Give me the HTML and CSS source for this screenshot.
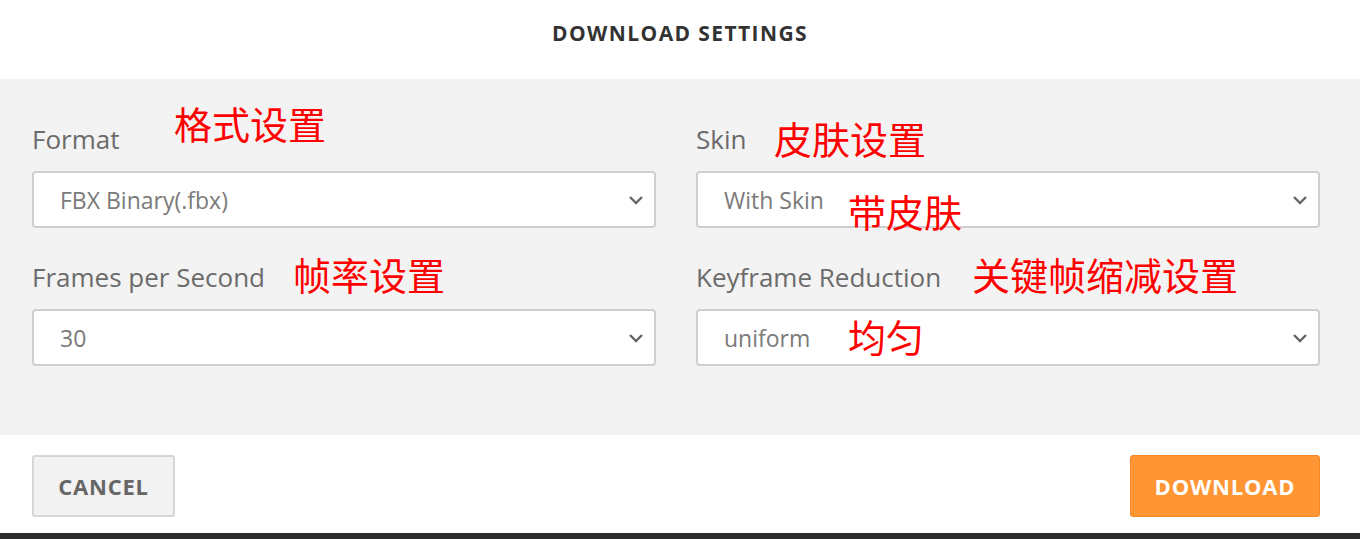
FILE: index.html
```html
<!DOCTYPE html>
<html lang="en">
<head>
  <meta charset="UTF-8">
  <title>Download Settings</title>
  <link rel="stylesheet" href="styles.css">
</head>
<body>
  <div class="dialog">
    <div class="dialog-header">Download Settings</div>

    <div class="dialog-body">
      <div class="field">
        <div class="field-label">Format</div>
        <div class="select">
          <span>FBX Binary(.fbx)</span>
          <svg class="chevron" viewBox="0 0 16 10"><path d="M2 2l6 6 6-6"/></svg>
        </div>
        <div class="note note-format">格式设置</div>
      </div>

      <div class="field">
        <div class="field-label">Skin</div>
        <div class="select">
          <span>With Skin</span>
          <svg class="chevron" viewBox="0 0 16 10"><path d="M2 2l6 6 6-6"/></svg>
        </div>
        <div class="note note-skin">皮肤设置</div>
        <div class="note note-withskin">带皮肤</div>
      </div>

      <div class="field">
        <div class="field-label">Frames per Second</div>
        <div class="select">
          <span>30</span>
          <svg class="chevron" viewBox="0 0 16 10"><path d="M2 2l6 6 6-6"/></svg>
        </div>
        <div class="note note-fps">帧率设置</div>
      </div>

      <div class="field">
        <div class="field-label">Keyframe Reduction</div>
        <div class="select">
          <span>uniform</span>
          <svg class="chevron" viewBox="0 0 16 10"><path d="M2 2l6 6 6-6"/></svg>
        </div>
        <div class="note note-keyframe">关键帧缩减设置</div>
        <div class="note note-uniform">均匀</div>
      </div>
    </div>

    <div class="dialog-footer">
      <button class="btn btn-cancel">Cancel</button>
      <button class="btn btn-download">Download</button>
    </div>
  </div>
  <div class="taskbar"></div>
</body>
</html>
```

FILE: styles.css
```css
body {
  margin: 0;
  font-family: "Open Sans", "Noto Sans", sans-serif;
  background: #fff;
  height: 539px;
  overflow: hidden;
}

.dialog {
  display: flex;
  flex-direction: column;
}

.dialog-header {
  height: 79px;
  display: flex;
  align-items: center;
  justify-content: center;
  padding-bottom: 14px;
  box-sizing: border-box;
  font-size: 21px;
  font-weight: 700;
  letter-spacing: 1.4px;
  text-transform: uppercase;
  color: #333;
}

.dialog-body {
  background: #f3f3f3;
  padding: 41px 40px 69px 32px;
  display: grid;
  grid-template-columns: 1fr 1fr;
  column-gap: 40px;
  row-gap: 30px;
}

.field {
  position: relative;
}

.field-label {
  font-size: 26px;
  line-height: 38px;
  color: #6b6b6b;
  margin-bottom: 13px;
}

.select {
  height: 57px;
  box-sizing: border-box;
  background: #fff;
  border: 2px solid #cfcfcf;
  border-radius: 4px;
  display: flex;
  align-items: center;
  justify-content: space-between;
  padding: 0 10px 0 26px;
  font-size: 23px;
  color: #7a7a7a;
}

.chevron {
  width: 16px;
  height: 10px;
  fill: none;
  stroke: #666;
  stroke-width: 2.4;
}

.note {
  position: absolute;
  font-family: "Noto Sans CJK SC", sans-serif;
  font-size: 38px;
  line-height: 38px;
  color: #ff0000;
  white-space: nowrap;
}

.note-format { left: 142px; top: -16px; }
.note-skin { left: 78px; top: -1px; }
.note-withskin { left: 152px; top: 72px; }
.note-fps { left: 261px; top: -3px; }
.note-keyframe { left: 276px; top: -3px; }
.note-uniform { left: 152px; top: 59px; }

.dialog-footer {
  height: 98px;
  box-sizing: border-box;
  padding: 20px 40px 16px 32px;
  display: flex;
  justify-content: space-between;
  align-items: flex-start;
}

.btn {
  height: 62px;
  border-radius: 3px;
  font-family: "Open Sans", sans-serif;
  font-size: 22px;
  font-weight: 700;
  text-transform: uppercase;
  letter-spacing: 0.8px;
  cursor: pointer;
}

.btn-cancel {
  width: 143px;
  background: #f2f2f2;
  border: 2px solid #d6d6d6;
  color: #666;
}

.btn-download {
  width: 190px;
  background: #ff9533;
  border: 1px solid #f58a25;
  color: #fff;
}

.taskbar {
  height: 6px;
  background: #2b2b2b;
}
```
